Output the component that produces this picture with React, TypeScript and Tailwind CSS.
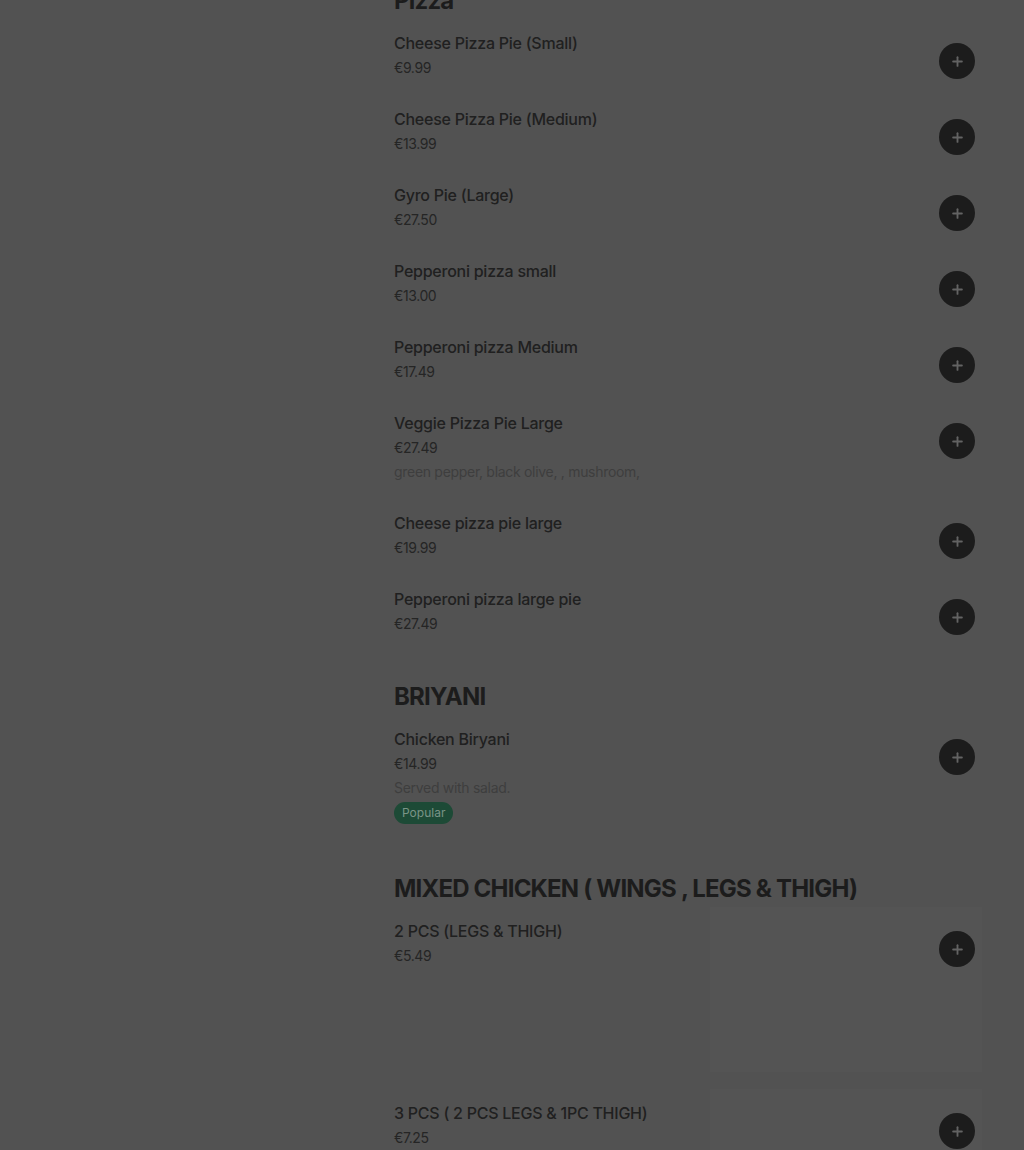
import { Plus } from "lucide-react";

interface Item {
  name: string;
  price: string;
  desc?: string;
  badge?: string;
  image?: boolean;
}

interface Section {
  title: string;
  items: Item[];
}

const sections: Section[] = [
  {
    title: "Pizza",
    items: [
      { name: "Cheese Pizza Pie (Small)", price: "€9.99" },
      { name: "Cheese Pizza Pie (Medium)", price: "€13.99" },
      { name: "Gyro Pie (Large)", price: "€27.50" },
      { name: "Pepperoni pizza small", price: "€13.00" },
      { name: "Pepperoni pizza Medium", price: "€17.49" },
      { name: "Veggie Pizza Pie Large", price: "€27.49", desc: "green pepper, black olive, , mushroom," },
      { name: "Cheese pizza pie large", price: "€19.99" },
      { name: "Pepperoni pizza large pie", price: "€27.49" },
    ],
  },
  {
    title: "BRIYANI",
    items: [{ name: "Chicken Biryani", price: "€14.99", desc: "Served with salad.", badge: "Popular" }],
  },
  {
    title: "MIXED CHICKEN ( WINGS , LEGS & THIGH)",
    items: [
      { name: "2 PCS (LEGS & THIGH)", price: "€5.49", image: true },
      { name: "3 PCS ( 2 PCS LEGS & 1PC THIGH)", price: "€7.25", image: true },
    ],
  },
];

function MenuRow({ item }: { item: Item }) {
  return (
    <div className={`relative flex items-start justify-between ${item.image ? "h-[182px]" : "pb-[31px]"}`}>
      {item.image && (
        <div className="absolute right-[-7px] top-[-14px] w-[272px] h-[165px] bg-[#545454]"></div>
      )}
      <div className="relative flex flex-col">
        <p className="text-[16px] leading-[20px] font-medium text-[#202020] tracking-[-0.25px]">{item.name}</p>
        <p className="mt-[5px] text-[14px] leading-[20px] text-[#252525] tracking-[-0.4px]">{item.price}</p>
        {item.desc && (
          <p className="mt-[4px] text-[14px] leading-[20px] text-[#3e3e3e] tracking-[-0.3px]">{item.desc}</p>
        )}
        {item.badge && (
          <span className="mt-[4px] mb-[2px] self-start rounded-full bg-[#1d4a36] px-[8px] h-[22px] flex items-center text-[12px] text-[#7a9486]">
            {item.badge}
          </span>
        )}
      </div>
      <button className="relative mt-[10px] mb-[-1px] w-9 h-9 rounded-full bg-[#1c1c1c] flex items-center justify-center shrink-0">
        <Plus size={15} strokeWidth={3} className="text-[#636363]" />
      </button>
    </div>
  );
}

export default function App() {
  return (
    <div
      className="h-[1150px] overflow-hidden bg-[#525252]"
      style={{ fontFamily: "Inter, 'Liberation Sans', sans-serif" }}
    >
      <div className="ml-[394px] w-[581px] mt-[-15px]">
        {sections.map((section) => (
          <section key={section.title} className="pb-[16px]">
            <h2 className="text-[24px] leading-[32px] font-bold text-[#1c1c1c] tracking-[-0.8px] mb-[16px]">
              {section.title}
            </h2>
            {section.items.map((item) => (
              <MenuRow key={item.name} item={item} />
            ))}
          </section>
        ))}
      </div>
    </div>
  );
}
